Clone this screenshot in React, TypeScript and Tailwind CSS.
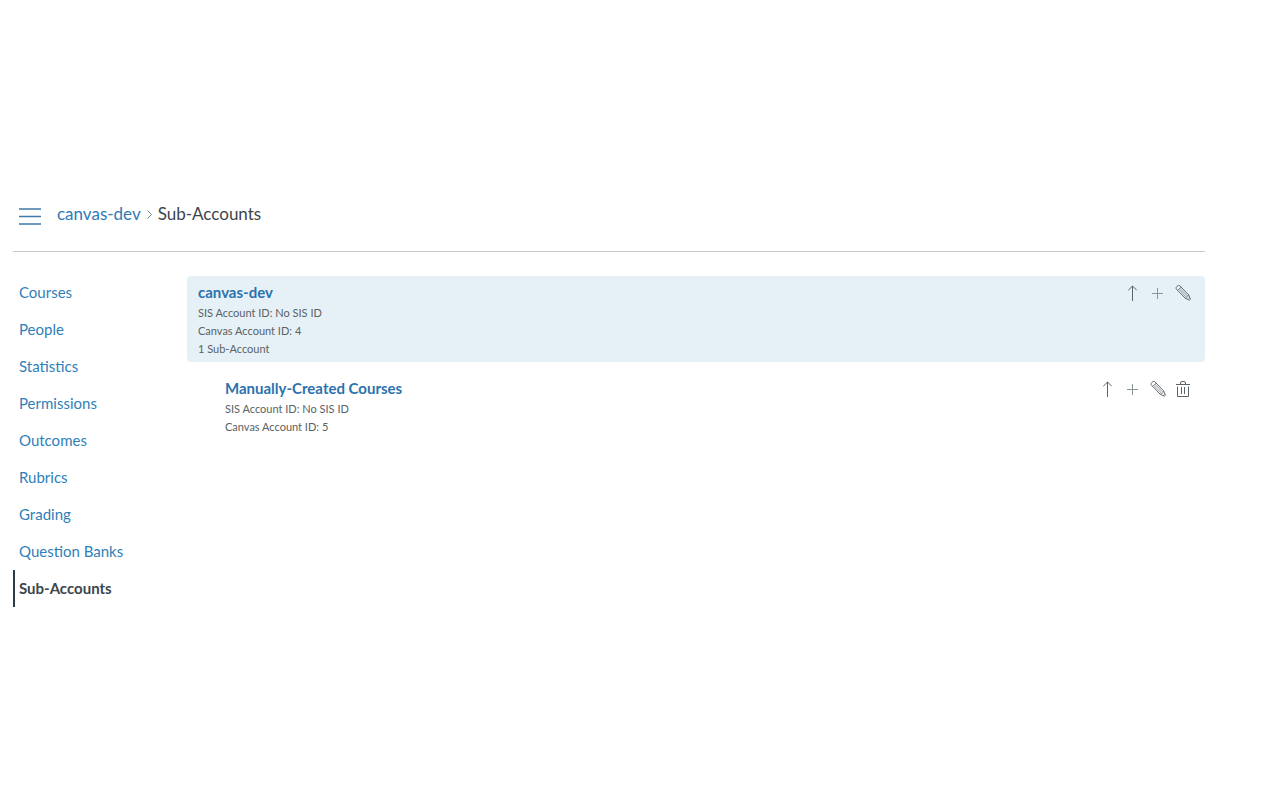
import type { ReactNode } from "react";

const navItems = [
  "Courses",
  "People",
  "Statistics",
  "Permissions",
  "Outcomes",
  "Rubrics",
  "Grading",
  "Question Banks",
  "Sub-Accounts",
];

function Icon({ children }: { children: ReactNode }) {
  return (
    <svg
      width="16"
      height="18"
      viewBox="0 0 16 18"
      fill="none"
      stroke="currentColor"
      strokeWidth="1"
      aria-hidden="true"
    >
      {children}
    </svg>
  );
}

const icons = {
  up: (
    <Icon>
      <path d="M7.5 17V2M3.3 6.2 7.5 2l4.2 4.2" />
    </Icon>
  ),
  add: (
    <Icon>
      <path d="M2 9.5h11M7.5 4v11" stroke="#8d9498" />
    </Icon>
  ),
  edit: (
    <Icon>
      <g transform="translate(8.5 9) rotate(46)">
        <path d="M-7.5-2.4H5L9.3-.7V.7L5 2.4H-7.500C-8.800 2.400-9.300 1.400-9.300 0S-8.800-2.400-7.500-2.400Z" strokeWidth=".9" />
        <path d="M-6-2.400v4.800M-6-.8H5M-6 .8H5M5-2.400 5.800 0 5 2.400M8-1.200v2.400" strokeWidth=".6" />
      </g>
    </Icon>
  ),
  remove: (
    <Icon>
      <path d="M1 4.500h14M5.500 4.500V3q0-1.500 1.500-1.500h2q1.500 0 1.500 1.500v1.500M2.500 6.500v10h11v-10M6.500 7v7M9.500 7v7" />
    </Icon>
  ),
};

type Action = keyof typeof icons;

const actionNames: Record<Action, string> = {
  up: "Go to parent account",
  add: "Add sub-account",
  edit: "Edit account",
  remove: "Delete account",
};

function Account({
  name,
  details,
  actions,
  className,
}: {
  name: string;
  details: string[];
  actions: Action[];
  className: string;
}) {
  return (
    <div className={`flex items-start justify-between pt-1.5 pr-3.5 pb-1 ${className}`}>
      <div>
        <h2 className="text-[15px] leading-5 font-bold text-[#2b72ad]">
          <a href="#">{name}</a>
        </h2>
        <div className="mt-0.5 text-[11px] leading-[18px] text-[#5a6265]">
          {details.map((detail) => (
            <p key={detail}>{detail}</p>
          ))}
        </div>
      </div>
      <div className="flex gap-[9px] pt-0.5 text-[#5c6468]">
        {actions.map((action) => (
          <button key={action} type="button" aria-label={actionNames[action]}>
            {icons[action]}
          </button>
        ))}
      </div>
    </div>
  );
}

export default function App() {
  return (
    <div className="min-h-screen bg-white pt-44 pr-[75px] pl-[13px] font-['Lato',sans-serif]">
      <header className="flex h-19 items-center border-b border-[#c7c9cb] pl-1.5">
        <button type="button" aria-label="Toggle navigation" className="pt-1.5 text-[#4179a8]">
          <svg width="22" height="17" viewBox="0 0 22 17" stroke="currentColor" strokeWidth="1.5" aria-hidden="true">
            <path d="M0 1h22M0 8.5h22M0 16h22" />
          </svg>
        </button>
        <nav aria-label="Breadcrumb" className="ml-4 flex items-center text-[17px] leading-6">
          <a href="#" className="text-[#2f7ab5]">canvas-dev</a>
          <span className="mx-1.5 pt-0.5">
            <svg width="5" height="9" viewBox="0 0 5 9" fill="none" stroke="#7d8488" aria-hidden="true">
              <path d="m.5.5 4 4-4 4" />
            </svg>
          </span>
          <span className="text-[#3d454c]">Sub-Accounts</span>
        </nav>
      </header>
      <div className="flex">
        <nav aria-label="Account" className="w-[174px] shrink-0 pt-[22px]">
          <ul>
            {navItems.map((item) => (
              <li key={item}>
                <a
                  href="#"
                  aria-current={item === "Sub-Accounts" ? "page" : undefined}
                  className={
                    item === "Sub-Accounts"
                      ? "flex h-[37px] items-center border-l-2 border-[#2d3b45] pl-1 text-[15px] font-bold text-[#3d454c]"
                      : "flex h-[37px] items-center border-l-2 border-transparent pl-1 text-[15px] text-[#2f7fb8]"
                  }
                >
                  {item}
                </a>
              </li>
            ))}
          </ul>
        </nav>
        <main className="min-w-0 flex-1 pt-6">
          <Account
            name="canvas-dev"
            details={["SIS Account ID: No SIS ID", "Canvas Account ID: 4", "1 Sub-Account"]}
            actions={["up", "add", "edit"]}
            className="rounded bg-[#e6f1f7] pl-[11px]"
          />
          <Account
            name="Manually-Created Courses"
            details={["SIS Account ID: No SIS ID", "Canvas Account ID: 5"]}
            actions={["up", "add", "edit", "remove"]}
            className="mt-2.5 pl-[38px]"
          />
        </main>
      </div>
    </div>
  );
}
